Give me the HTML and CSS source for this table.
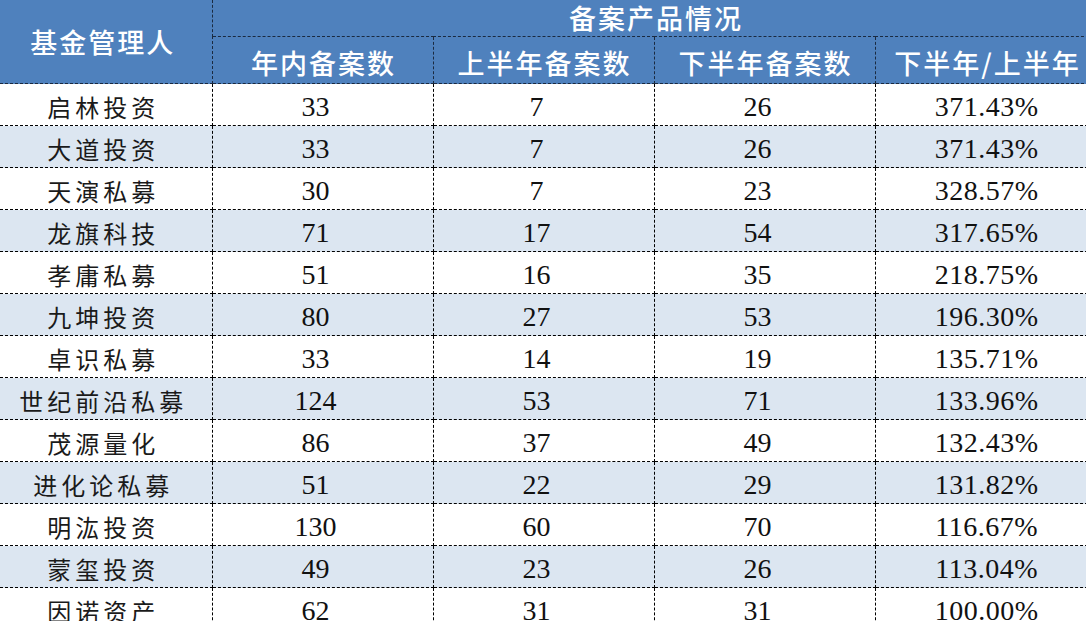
FILE: index.html
```html
<!DOCTYPE html>
<html lang="zh-CN">
<head>
<meta charset="utf-8">
<title>备案产品情况</title>
<link rel="stylesheet" href="styles.css">
</head>
<body>
<div class="sheet">
<table class="grid">
  <colgroup>
    <col class="c-name">
    <col class="c-num">
    <col class="c-num">
    <col class="c-num">
    <col class="c-ratio">
  </colgroup>
  <thead>
    <tr class="h1">
      <th rowspan="2" class="hd hd-name"><span class="ht">基金管理人</span></th>
      <th colspan="4" class="hd hd-group"><span class="ht">备案产品情况</span></th>
    </tr>
    <tr class="h2">
      <th class="hd"><span class="ht">年内备案数</span></th>
      <th class="hd"><span class="ht">上半年备案数</span></th>
      <th class="hd"><span class="ht">下半年备案数</span></th>
      <th class="hd"><span class="ht">下半年/上半年</span></th>
    </tr>
  </thead>
  <tbody>
    <tr><td class="name">启林投资</td><td class="num">33</td><td class="num">7</td><td class="num">26</td><td class="ratio">371.43%</td></tr>
    <tr class="alt"><td class="name">大道投资</td><td class="num">33</td><td class="num">7</td><td class="num">26</td><td class="ratio">371.43%</td></tr>
    <tr><td class="name">天演私募</td><td class="num">30</td><td class="num">7</td><td class="num">23</td><td class="ratio">328.57%</td></tr>
    <tr class="alt"><td class="name">龙旗科技</td><td class="num">71</td><td class="num">17</td><td class="num">54</td><td class="ratio">317.65%</td></tr>
    <tr><td class="name">孝庸私募</td><td class="num">51</td><td class="num">16</td><td class="num">35</td><td class="ratio">218.75%</td></tr>
    <tr class="alt"><td class="name">九坤投资</td><td class="num">80</td><td class="num">27</td><td class="num">53</td><td class="ratio">196.30%</td></tr>
    <tr><td class="name">卓识私募</td><td class="num">33</td><td class="num">14</td><td class="num">19</td><td class="ratio">135.71%</td></tr>
    <tr class="alt"><td class="name">世纪前沿私募</td><td class="num">124</td><td class="num">53</td><td class="num">71</td><td class="ratio">133.96%</td></tr>
    <tr><td class="name">茂源量化</td><td class="num">86</td><td class="num">37</td><td class="num">49</td><td class="ratio">132.43%</td></tr>
    <tr class="alt"><td class="name">进化论私募</td><td class="num">51</td><td class="num">22</td><td class="num">29</td><td class="ratio">131.82%</td></tr>
    <tr><td class="name">明汯投资</td><td class="num">130</td><td class="num">60</td><td class="num">70</td><td class="ratio">116.67%</td></tr>
    <tr class="alt"><td class="name">蒙玺投资</td><td class="num">49</td><td class="num">23</td><td class="num">26</td><td class="ratio">113.04%</td></tr>
    <tr><td class="name">因诺资产</td><td class="num">62</td><td class="num">31</td><td class="num">31</td><td class="ratio">100.00%</td></tr>
  </tbody>
</table>
</div>
</body>
</html>
```

FILE: styles.css
```css
html, body {
  margin: 0;
  padding: 0;
  background: #ffffff;
}

.sheet {
  width: 1086px;
  height: 621px;
  overflow: hidden;
}

.grid {
  border-collapse: collapse;
  table-layout: fixed;
  width: 1098px;
  font-family: "Liberation Serif", "Noto Sans CJK SC", serif;
  color: #111111;
}

.c-name { width: 212px; }
.c-num { width: 221px; }
.c-ratio { width: 223px; }

.hd {
  background: #4f81bd;
  color: #ffffff;
  font-family: "Noto Sans CJK SC", sans-serif;
  font-weight: 500;
  font-size: 27px;
  line-height: 1;
  text-align: center;
  padding: 0;
  border: 1px dashed #1a2a40;
}

.ht {
  letter-spacing: 2px;
  padding-left: 2px;
}

.h1 .hd { height: 34px; }
.h1 .hd-group {
  border-top: none;
  border-bottom: 1px dashed #1a2a40;
  vertical-align: middle;
  padding-bottom: 2px;
}
.hd-name {
  border-top: none;
  border-left: none;
  padding-right: 8px;
}
.h2 .hd {
  height: 42px;
  padding-top: 4px;
}

tbody td {
  height: 37px;
  padding: 4px 0 0 0;
  border: 1px dashed #000000;
  text-align: center;
  line-height: 1;
  white-space: nowrap;
}

tbody tr.alt td {
  background: #dce6f1;
}

tbody td:first-child { border-left: none; }
tbody td:last-child { border-right: none; }

.name {
  font-family: "Noto Sans CJK SC", sans-serif;
  font-size: 24px;
  letter-spacing: 4px;
  padding-right: 5px;
  color: #1a1a1a;
}

.num {
  font-size: 28px;
  padding-right: 14px;
}

.ratio {
  font-size: 28px;
  letter-spacing: 0.5px;
  padding-left: 0;
}
```
